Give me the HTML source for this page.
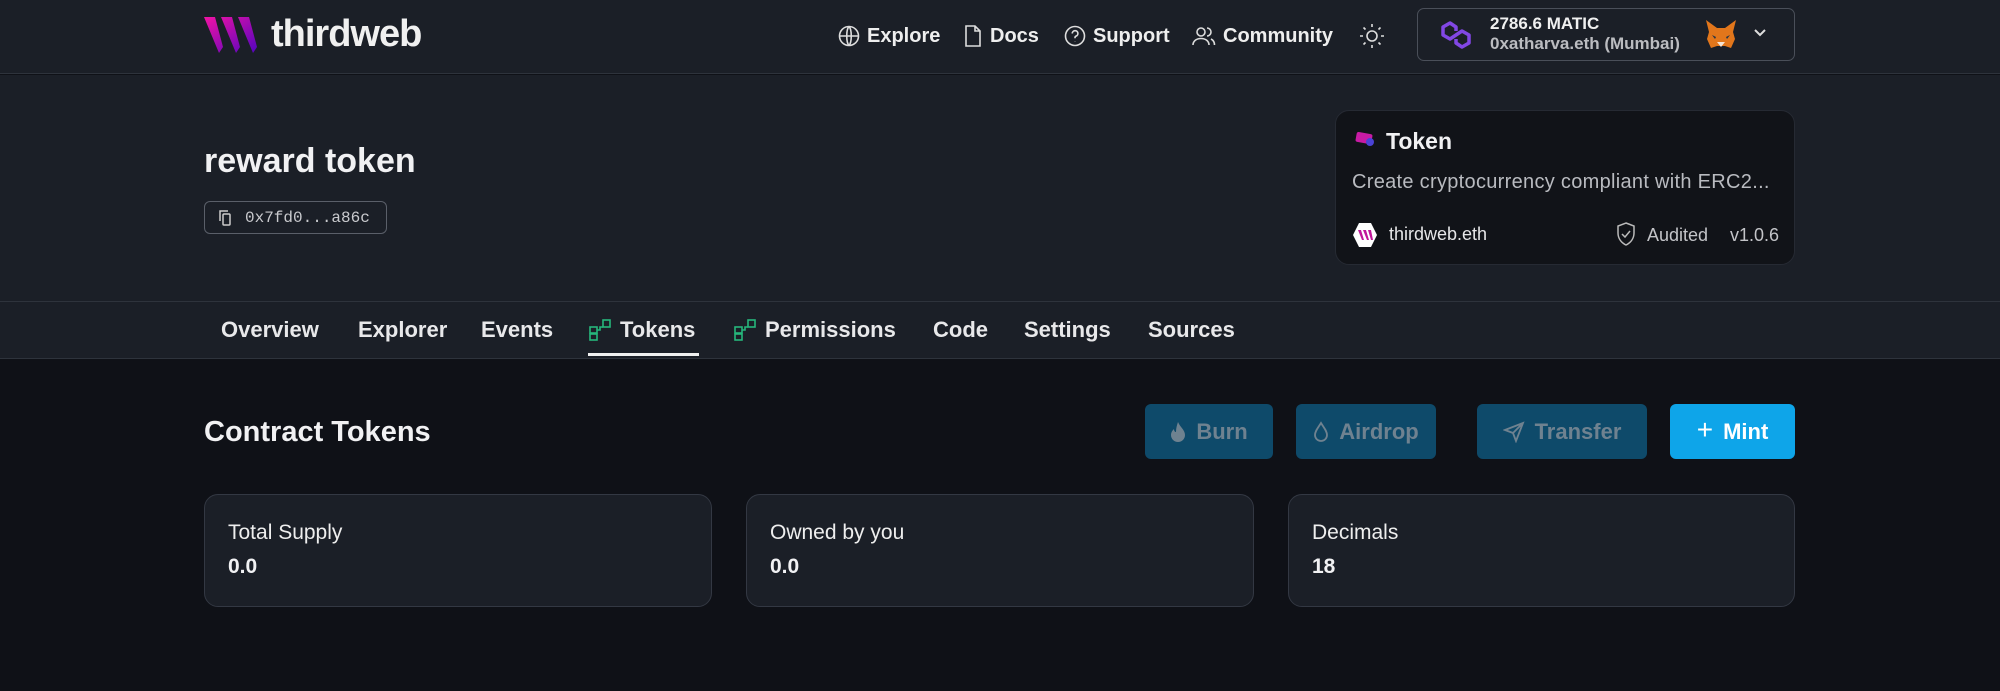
<!DOCTYPE html>
<html><head><meta charset="utf-8"><style>
*{box-sizing:border-box;margin:0;padding:0}
body{width:2000px;height:691px;background:#0f1117;font-family:"Liberation Sans",sans-serif;color:#f1f1f3;position:relative;overflow:hidden}
.abs{position:absolute}
.hdr{left:0;top:0;width:2000px;height:74px;background:#1b1f27;border-bottom:1px solid #2e333c}
.sec{left:0;top:75px;width:2000px;height:226px;background:#1b1f27}
.tabs{left:0;top:301px;width:2000px;height:58px;background:#1b1f27;border-top:1px solid #2e333c;border-bottom:1px solid #2e333c}
.nav{font-size:20px;font-weight:bold;top:24px;display:flex;align-items:center;gap:6px;color:#eee}
.tab{top:317px;font-size:22px;font-weight:bold;color:#e8e8ea;display:flex;align-items:center;gap:8px}
.btn{top:404px;height:55px;border-radius:6px;background:#0e4a6a;color:#6f8290;font-size:22px;font-weight:bold;display:flex;align-items:center;justify-content:center;gap:10px}
.card{top:494px;height:113px;width:508px;border:1px solid #333843;border-radius:14px;background:#1b1f27;padding:26px 23px}
.card .l{font-size:21px;color:#eee}
.card .v{font-size:21px;font-weight:bold;margin-top:10px}
</style></head><body>
<div class="abs hdr"></div>
<div class="abs sec"></div>
<div class="abs tabs"></div>
<svg class="abs" style="left:204px;top:17px" width="58" height="36" viewBox="0 0 58 36">
<defs><linearGradient id="g" x1="0" y1="0" x2="1" y2="1"><stop offset="0" stop-color="#f213a4"/><stop offset="1" stop-color="#5204bf"/></linearGradient></defs>
<path d="M0 0h11l8 30-4 6zM17 0h11l8 30-4 6zM34 0h11l8 30-4 6z" fill="url(#g)"/></svg>
<div class="abs" style="left:271px;top:13px;font-size:38px;font-weight:bold;letter-spacing:-1px;color:#f0f0f0">thirdweb</div>
<div class="abs nav" style="left:837px"><svg width="24" height="24" viewBox="0 0 24 24" fill="none" stroke="#ddd" stroke-width="1.6"><circle cx="12" cy="12" r="9.5"/><path d="M2.5 12h19M12 2.5c3 3 3 16 0 19M12 2.5c-3 3-3 16 0 19"/></svg>Explore</div>
<div class="abs nav" style="left:962px"><svg width="22" height="24" viewBox="0 0 22 24" fill="none" stroke="#ddd" stroke-width="1.6"><path d="M4 2h9l5 5v15H4zM13 2v5h5"/></svg>Docs</div>
<div class="abs nav" style="left:1063px"><svg width="24" height="24" viewBox="0 0 24 24" fill="none" stroke="#ddd" stroke-width="1.6"><circle cx="12" cy="12" r="9.5"/><path d="M9.3 9.5a2.8 2.8 0 1 1 3.7 2.6c-.7.3-1 .9-1 1.6v.6M12 17.2v.3"/></svg>Support</div>
<div class="abs nav" style="left:1191px"><svg width="26" height="24" viewBox="0 0 26 24" fill="none" stroke="#ddd" stroke-width="1.6"><circle cx="10" cy="8" r="4"/><path d="M2 21c0-4 3.5-6.5 8-6.5s8 2.5 8 6.5M16 4a4 4 0 0 1 0 8M20 15c2 1 3.5 3 3.5 6"/></svg>Community</div>
<svg class="abs" style="left:1359px;top:23px" width="26" height="26" viewBox="0 0 26 26" fill="none" stroke="#ddd" stroke-width="1.6"><circle cx="13" cy="13" r="5"/><path d="M13 1v3M13 22v3M1 13h3M22 13h3M4.5 4.5l2 2M19.5 19.5l2 2M4.5 21.5l2-2M19.5 6.5l2-2"/></svg>
<div class="abs" style="left:1417px;top:8px;width:378px;height:53px;border:1.5px solid #4a4f59;border-radius:7px"></div>
<svg class="abs" style="left:1438px;top:19px" width="36" height="32" viewBox="0 0 36 32" fill="none" stroke="#8247e5" stroke-width="3.5" stroke-linejoin="round"><path d="M18 12V8l-6-4-7 4v8l7 4 6-4M18 20v4l6 4 7-4v-8l-7-4-6 4"/></svg>
<div class="abs" style="left:1490px;top:14px;font-size:17px;font-weight:bold;line-height:20px;color:#f0f0f0">2786.6 MATIC<br><span style="color:#bbbcc0">0xatharva.eth (Mumbai)</span></div>
<svg class="abs" style="left:1704px;top:18px" width="34" height="34" viewBox="0 0 34 34"><path d="M2 2l11 8h8l11-8-3 12 2 7-4 9-6-2h-8l-6 2-4-9 2-7z" fill="#e2761b"/><path d="M13 24h8l-4 5z" fill="#f5e4d4"/><path d="M8 17l4 2-1 2zM26 17l-4 2 1 2z" fill="#233447"/></svg>
<svg class="abs" style="left:1752px;top:27px" width="16" height="12" viewBox="0 0 16 12" fill="none" stroke="#ddd" stroke-width="2"><path d="M3 3l5 5 5-5"/></svg>
<div class="abs" style="left:204px;top:142px;font-size:34px;font-weight:bold">reward token</div>
<div class="abs" style="left:204px;top:201px;width:183px;height:33px;border:1.5px solid #5a5f69;border-radius:6px;font-family:'Liberation Mono',monospace;font-size:16px;color:#c9cace;padding:7px 0 0 40px">0x7fd0...a86c</div>
<svg class="abs" style="left:217px;top:209px" width="16" height="18" viewBox="0 0 16 18" fill="none" stroke="#ccc" stroke-width="1.5"><path d="M3 12V2h8"/><rect x="6" y="5" width="7" height="11" rx="1"/></svg>
<div class="abs" style="left:1335px;top:110px;width:460px;height:155px;background:#111318;border:1px solid #262a33;border-radius:14px"></div>
<svg class="abs" style="left:1355px;top:132px" width="20" height="16" viewBox="0 0 20 16"><rect x="1" y="1" width="16" height="10" rx="2" fill="#c81ba4" transform="rotate(10 9 6)"/><circle cx="15" cy="10" r="4" fill="#4b43d6"/></svg>
<div class="abs" style="left:1386px;top:128px;font-size:23px;font-weight:bold">Token</div>
<div class="abs" style="left:1352px;top:171px;font-size:20px;color:#b9bbc0;letter-spacing:0.3px">Create cryptocurrency compliant with ERC2...</div>
<svg class="abs" style="left:1352px;top:222px" width="26" height="26" viewBox="0 0 26 26"><path d="M7 1h12l6 12-6 12H7L1 13z" fill="#fff"/><path d="M6 8h3l3 10h-2zM11 8h3l3 10h-2zM16 8h3l2 10h-2z" fill="#c0169a"/></svg>
<div class="abs" style="left:1389px;top:224px;font-size:18px;color:#e6e6e8">thirdweb.eth</div>
<svg class="abs" style="left:1616px;top:222px" width="20" height="24" viewBox="0 0 20 24" fill="none" stroke="#bbb" stroke-width="1.5"><path d="M10 1l8 3v7c0 6-4 10-8 12-4-2-8-6-8-12V4z M6 12l3 3 5-6"/></svg>
<div class="abs" style="left:1647px;top:225px;font-size:18px;color:#c3c4c8">Audited</div>
<div class="abs" style="left:1730px;top:225px;font-size:18px;color:#c3c4c8">v1.0.6</div>
<div class="abs tab" style="left:221px">Overview</div>
<div class="abs tab" style="left:358px">Explorer</div>
<div class="abs tab" style="left:481px">Events</div>
<div class="abs tab" style="left:588px"><svg width="24" height="24" viewBox="0 0 24 24" fill="none" stroke="#26b67c" stroke-width="1.6"><rect x="2" y="9" width="7" height="6"/><rect x="2" y="16" width="7" height="6"/><rect x="15" y="2" width="7" height="7"/><path d="M9 12h3v-3h3"/></svg>Tokens</div>
<div class="abs tab" style="left:733px"><svg width="24" height="24" viewBox="0 0 24 24" fill="none" stroke="#26b67c" stroke-width="1.6"><rect x="2" y="9" width="7" height="6"/><rect x="2" y="16" width="7" height="6"/><rect x="15" y="2" width="7" height="7"/><path d="M9 12h3v-3h3"/></svg>Permissions</div>
<div class="abs tab" style="left:933px">Code</div>
<div class="abs tab" style="left:1024px">Settings</div>
<div class="abs tab" style="left:1148px">Sources</div>
<div class="abs" style="left:588px;top:353px;width:111px;height:3px;background:#f0f0f0"></div>
<div class="abs" style="left:204px;top:416px;font-size:29px;font-weight:bold">Contract Tokens</div>
<div class="abs btn" style="left:1145px;width:128px"><svg width="16" height="22" viewBox="0 0 16 22" fill="#6f8290"><path d="M8 1c2 5 7 8 7 13a7 7 0 0 1-14 0c0-3 2-5 3-6 0 2 1 3 2 3 0-4 1-7 2-10z"/></svg>Burn</div>
<div class="abs btn" style="left:1296px;width:140px"><svg width="16" height="22" viewBox="0 0 16 22" fill="none" stroke="#6f8290" stroke-width="1.8"><path d="M8 2c3 5 6 8 6 12a6 6 0 0 1-12 0c0-4 3-7 6-12z"/></svg>Airdrop</div>
<div class="abs btn" style="left:1477px;width:170px"><svg width="22" height="22" viewBox="0 0 22 22" fill="none" stroke="#6f8290" stroke-width="1.8"><path d="M20 2L2 9l8 3 3 8zM20 2l-10 10"/></svg>Transfer</div>
<div class="abs btn" style="left:1670px;width:125px;background:#0ea5e9;color:#fff"><span style="font-size:28px;font-weight:normal;margin-top:-3px">+</span>Mint</div>
<div class="abs card" style="left:204px"><div class="l">Total Supply</div><div class="v">0.0</div></div>
<div class="abs card" style="left:746px"><div class="l">Owned by you</div><div class="v">0.0</div></div>
<div class="abs card" style="left:1288px;width:507px"><div class="l">Decimals</div><div class="v">18</div></div>
</body></html>
